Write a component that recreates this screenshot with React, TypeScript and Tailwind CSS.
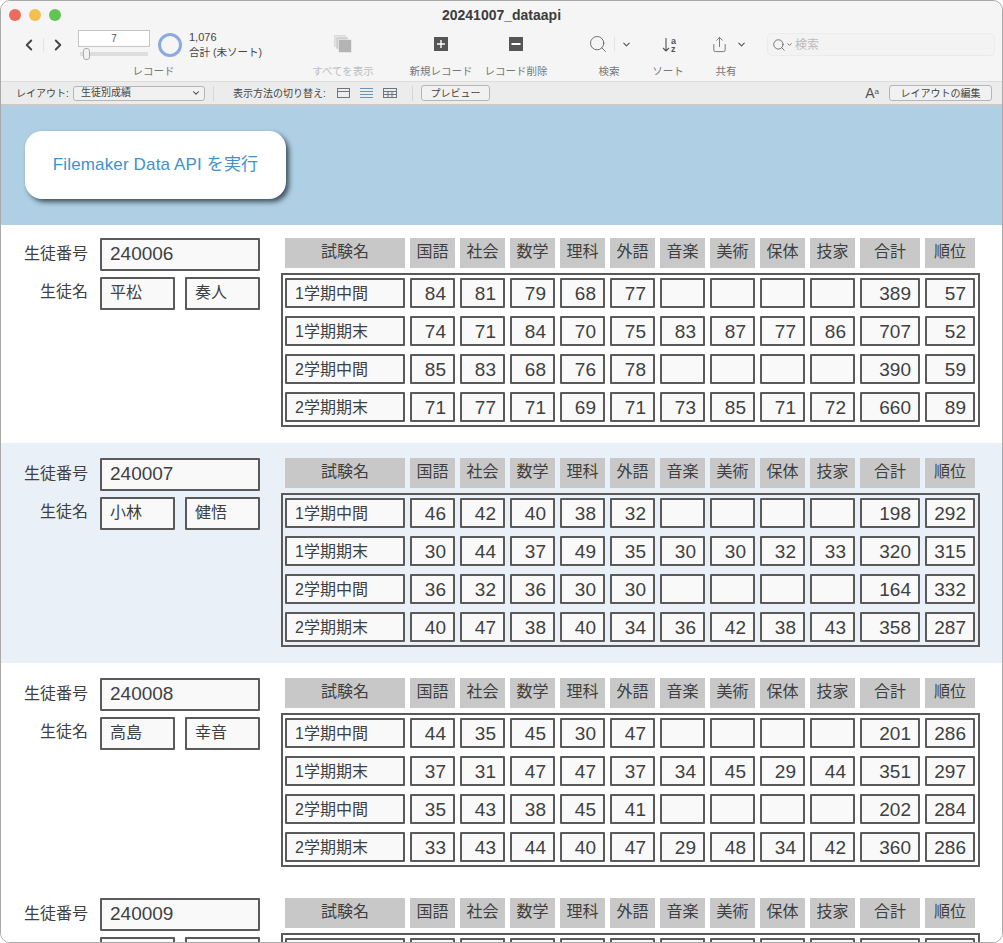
import React from 'react'
import { ChevronDown, ChevronLeft, ChevronRight, Search, Share } from 'lucide-react'

const SUBJECTS = ['国語', '社会', '数学', '理科', '外語', '音楽', '美術', '保体', '技家']
const EXAMS = ['1学期中間', '1学期期末', '2学期中間', '2学期期末']

type Student = { no: string; last: string; first: string; rows: (number | null)[][] }

const _ = null
const STUDENTS: Student[] = [
  {
    no: '240006',
    last: '平松',
    first: '奏人',
    rows: [
      [84, 81, 79, 68, 77, _, _, _, _, 389, 57],
      [74, 71, 84, 70, 75, 83, 87, 77, 86, 707, 52],
      [85, 83, 68, 76, 78, _, _, _, _, 390, 59],
      [71, 77, 71, 69, 71, 73, 85, 71, 72, 660, 89],
    ],
  },
  {
    no: '240007',
    last: '小林',
    first: '健悟',
    rows: [
      [46, 42, 40, 38, 32, _, _, _, _, 198, 292],
      [30, 44, 37, 49, 35, 30, 30, 32, 33, 320, 315],
      [36, 32, 36, 30, 30, _, _, _, _, 164, 332],
      [40, 47, 38, 40, 34, 36, 42, 38, 43, 358, 287],
    ],
  },
  {
    no: '240008',
    last: '高島',
    first: '幸音',
    rows: [
      [44, 35, 45, 30, 47, _, _, _, _, 201, 286],
      [37, 31, 47, 47, 37, 34, 45, 29, 44, 351, 297],
      [35, 43, 38, 45, 41, _, _, _, _, 202, 284],
      [33, 43, 44, 40, 47, 29, 48, 34, 42, 360, 286],
    ],
  },
  // only the top of this one is on screen
  { no: '240009', last: '', first: '', rows: [] },
]

const GRID = 'grid grid-cols-[120px_repeat(9,45px)_60px_50px] gap-x-[5px]'
const CELL = 'h-[30px] border-2 border-[#5a5a5a] bg-[#f9f9f9] text-[#3f3f3f] rounded-[1px]'

function ToolItem({ width, label, dim, children }: { width: string; label: string; dim?: boolean; children: React.ReactNode }) {
  return (
    <div className={`${width} flex shrink-0 flex-col items-center`}>
      <div className="flex h-[30px] items-center justify-center">{children}</div>
      <span className={`mt-[5px] text-[10.5px] leading-[14px] whitespace-nowrap ${dim ? 'text-[#bdbdbd]' : 'text-[#777]'}`}>{label}</span>
    </div>
  )
}

function Toolbar() {
  return (
    <div className="h-[81px] rounded-t-[10px] border-b border-[#dcdcdc] bg-[#f5f5f5]">
      {/* title */}
      <div className="relative flex h-[28px] items-center justify-center">
        <div className="absolute top-[8px] left-[8px] flex gap-[8px]">
          <span className="h-[12px] w-[12px] rounded-full bg-[#ed6a5e]" />
          <span className="h-[12px] w-[12px] rounded-full bg-[#f4bf4f]" />
          <span className="h-[12px] w-[12px] rounded-full bg-[#61c554]" />
        </div>
        <span className="text-[14px] font-bold text-[#3c3c3c]">20241007_dataapi</span>
      </div>
      {/* tools */}
      <div className="flex pl-[19px]">
        <div className="flex w-[251px] shrink-0 flex-col items-center">
          <div className="flex h-[32px] w-full items-center">
            <ChevronLeft className="h-[18px] w-[18px] text-[#444]" strokeWidth={2.5} />
            <span className="ml-[5px] h-[14px] w-px bg-[#e4e4e4]" />
            <ChevronRight className="ml-[5px] h-[18px] w-[18px] text-[#444]" strokeWidth={2.5} />
            <div className="-mt-[5px] ml-[11px] flex w-[72px] flex-col">
              <div className="h-[17px] border border-[#c4c4c4] bg-white text-center text-[10px] leading-[15px] text-[#555]">7</div>
              <div className="relative mx-[2px] mt-[5px] h-[4px] bg-[#dedede]">
                <span className="absolute top-[-4px] left-[3px] h-[12px] w-[7px] rounded-[3px] border border-[#aaa] bg-[#f2f2f2]" />
              </div>
            </div>
            <span className="ml-[8px] h-[24px] w-[24px] rounded-full border-[3px] border-[#8aaae0]" />
            <div className="ml-[7px] text-[11px] leading-[15px] text-[#444]">
              <div>1,076</div>
              <div className="text-[10.5px] whitespace-nowrap">合計 (未ソート)</div>
            </div>
          </div>
          <span className="mt-[3px] ml-[16px] text-[10.5px] leading-[14px] text-[#777]">レコード</span>
        </div>
        <div className="w-[22px] shrink-0" />
        <ToolItem width="w-[100px]" label="すべてを表示" dim>
          <svg width="18" height="18" viewBox="0 0 18 18">
            <rect x="0" y="0" width="12" height="12" fill="#dcdcdc" />
            <rect x="2" y="2" width="12" height="12" fill="#cbcbcb" stroke="#f5f5f5" strokeWidth="0.6" />
            <rect x="4.5" y="4.5" width="13" height="13" fill="#b4b4b4" stroke="#f5f5f5" strokeWidth="0.6" />
          </svg>
        </ToolItem>
        <ToolItem width="w-[96px]" label="新規レコード">
          <svg width="14" height="14" viewBox="0 0 14 14">
            <rect width="14" height="14" fill="#555" />
            <path d="M7 3v8M3 7h8" stroke="#fff" strokeWidth="1.4" />
          </svg>
        </ToolItem>
        <ToolItem width="w-[54px]" label="レコード削除">
          <svg width="14" height="14" viewBox="0 0 14 14">
            <rect width="14" height="14" fill="#555" />
            <path d="M2.5 7h9" stroke="#fff" strokeWidth="1.8" />
          </svg>
        </ToolItem>
        <div className="w-[33px] shrink-0" />
        <ToolItem width="w-[66px]" label="検索">
          <Search className="ml-[2px] h-[20px] w-[20px] text-[#666]" strokeWidth={1.1} />
          <span className="mx-[6px] h-[14px] w-px bg-[#e4e4e4]" />
          <ChevronDown className="h-[11px] w-[11px] text-[#555]" strokeWidth={2.5} />
        </ToolItem>
        <ToolItem width="w-[52px]" label="ソート">
          <svg width="16" height="17" viewBox="0 0 16 17" fill="none" className="ml-[4px]">
            <path d="M4 2v13M1 12l3 3 3-3" stroke="#555" strokeWidth="1.1" />
            <text x="9" y="7.5" fontSize="9" fontWeight="700" fill="#555" fontFamily="Liberation Sans">a</text>
            <text x="9" y="15.5" fontSize="9" fontWeight="700" fill="#555" fontFamily="Liberation Sans">z</text>
          </svg>
        </ToolItem>
        <ToolItem width="w-[64px]" label="共有">
          <Share className="ml-[5px] h-[17px] w-[17px] text-[#666]" strokeWidth={1.2} />
          <ChevronDown className="ml-[8px] h-[11px] w-[11px] text-[#555]" strokeWidth={2.5} />
        </ToolItem>
        <div className="mt-[4px] ml-[9px] flex h-[23px] w-[228px] items-center rounded-[5px] border border-[#ececec] bg-[#f3f3f3] pl-[4px] text-[12px] text-[#bbb]">
          <Search className="h-[14px] w-[14px] text-[#666]" strokeWidth={1.5} />
          <ChevronDown className="h-[7px] w-[7px] text-[#666]" strokeWidth={3} />
          <span className="ml-[2px]">検索</span>
        </div>
      </div>
    </div>
  )
}

function LayoutBar() {
  return (
    <div className="flex h-[24px] items-center border-b-2 border-[#c9c9c9] bg-[#ececec] pl-[15px] text-[10px] text-[#444]">
      <span className="w-[57px] shrink-0 whitespace-nowrap">レイアウト:</span>
      <div className="flex h-[15px] w-[132px] shrink-0 items-center justify-between rounded-[3px] border border-[#b5b5b5] bg-[#f1f1f1] pr-[3px] pl-[7px] leading-none">
        <span>生徒別成績</span>
        <ChevronDown className="h-[10px] w-[10px] text-[#333]" strokeWidth={2.5} />
      </div>
      <span className="ml-[8px] h-[15px] w-px bg-[#d6d6d6]" />
      <span className="ml-[19px] w-[104px] shrink-0 whitespace-nowrap">表示方法の切り替え:</span>
      <svg width="68" height="12" viewBox="0 0 68 12" fill="none" className="shrink-0" stroke="#6d7680">
        <rect x="0.5" y="1.5" width="12" height="9" />
        <path d="M0.5 4.5h12" />
        <path d="M23 1.5h13M23 4.5h13M23 7.5h13M23 10.5h13" stroke="#7390ad" />
        <rect x="46.5" y="1.5" width="13" height="9" />
        <path d="M46.5 4.5h13M46.5 7.5h13M51 4.5v6M55 4.5v6" />
      </svg>
      <span className="ml-[7px] h-[15px] w-px bg-[#d6d6d6]" />
      <div className="ml-[8px] flex h-[16px] w-[69px] shrink-0 items-center justify-center rounded-[3px] border border-[#b5b5b5] bg-[#f1f1f1]">プレビュー</div>
      <span className="ml-auto text-[14px] leading-none font-light text-[#555]">
        A<sup className="text-[8px]">a</sup>
      </span>
      <div className="mr-[10px] ml-[10px] flex h-[16px] w-[103px] shrink-0 items-center justify-center rounded-[3px] border border-[#b5b5b5] bg-[#f1f1f1]">レイアウトの編集</div>
    </div>
  )
}

function NameField({ className, value, big }: { className: string; value: string; big?: boolean }) {
  return (
    <div className={`${className} h-[33px] rounded-[1px] border-2 border-[#5a5a5a] bg-[#f9f9f9] pl-[8px] text-[#3f3f3f] ${big ? 'text-[19px] leading-[27px]' : 'text-[16px] leading-[28px]'}`}>{value}</div>
  )
}

function StudentRecord({ student, tinted, first }: { student: Student; tinted: boolean; first: boolean }) {
  return (
    <div className={`flex shrink-0 pl-[21px] ${first ? 'h-[218px] pt-[13px]' : 'h-[220px] pt-[15px]'} ${tinted ? 'bg-[#e9f0f8]' : 'bg-white'}`}>
      {/* student info */}
      <div className="w-[238px] shrink-0">
        <div className="flex h-[33px] items-start">
          <span className="w-[66px] pt-[4px] text-right text-[16px] leading-[24px] text-[#3f3f3f]">生徒番号</span>
          <NameField className="ml-[12px] w-[160px]" value={student.no} big />
        </div>
        <div className="mt-[6px] flex h-[33px] items-start">
          <span className="w-[66px] pt-[3px] text-right text-[16px] leading-[24px] text-[#3f3f3f]">{student.last && '生徒名'}</span>
          <NameField className="ml-[12px] w-[75px]" value={student.last} />
          <NameField className="ml-[10px] w-[75px]" value={student.first} />
        </div>
      </div>
      {/* scores */}
      <div className="ml-[21px] shrink-0">
        <div className={`${GRID} ml-[4px] text-[16px] leading-[27px] text-[#3f3f3f]`}>
          <div className="h-[30px] bg-[#c8c8c8] text-center">試験名</div>
          {SUBJECTS.map((s) => (
            <div key={s} className="h-[30px] bg-[#c8c8c8] text-center">{s}</div>
          ))}
          <div className="h-[30px] bg-[#c8c8c8] text-center">合計</div>
          <div className="h-[30px] bg-[#c8c8c8] text-center">順位</div>
        </div>
        <div className="mt-[5px] flex w-[699px] flex-col gap-y-[8px] border-2 border-[#5a5a5a] px-[2px] pt-[3px] pb-[3px]">
          {EXAMS.map((exam, i) => (
            <div key={exam} className={GRID}>
              <div className={`${CELL} pl-[8px] text-[16px] leading-[27px]`}>{student.rows.length > 0 && exam}</div>
              {(student.rows[i] ?? Array(11).fill(null)).map((v, j) => (
                <div key={j} className={`${CELL} pr-[7px] text-right text-[19px] leading-[27px]`}>{v}</div>
              ))}
            </div>
          ))}
        </div>
      </div>
    </div>
  )
}

export default function App() {
  return (
    <div
      className="h-[943px] w-[1003px] overflow-hidden rounded-[10px] border border-[#a9a9a9] bg-white"
      style={{ fontFamily: '"Liberation Sans", "Noto Sans CJK JP", sans-serif' }}
    >
      <Toolbar />
      <LayoutBar />
      <div className="flex h-[119px] items-start bg-[#aecfe4] pt-[25px] pl-[24px]">
        <button className="flex h-[68px] w-[261px] items-center justify-center rounded-[17px] bg-white text-[17px] tracking-[0.15px] text-[#3f90cf] shadow-[3px_3px_5px_rgba(30,40,50,0.75)]">
          Filemaker Data API を実行
        </button>
      </div>
      <div className="flex flex-col">
        {STUDENTS.map((s, i) => (
          <StudentRecord key={s.no} student={s} tinted={i === 1} first={i === 0} />
        ))}
      </div>
    </div>
  )
}
